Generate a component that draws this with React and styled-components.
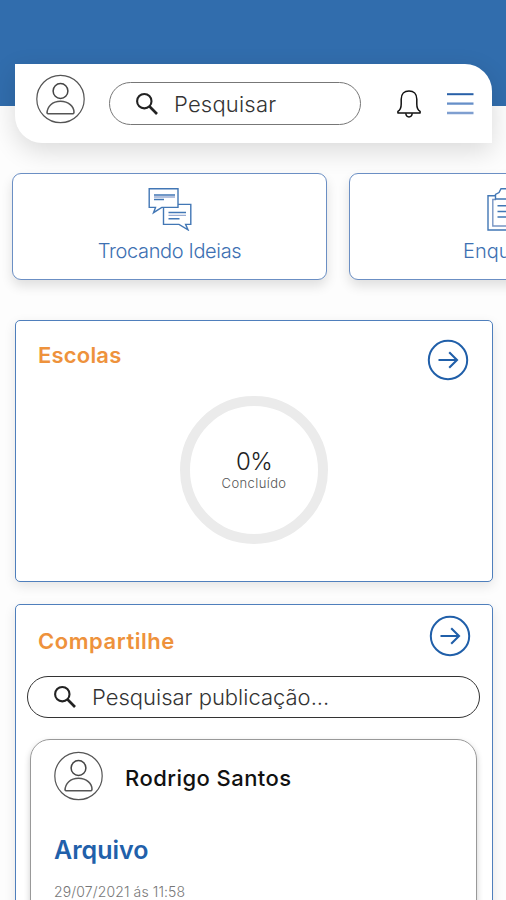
import React from "react";
import styled, { createGlobalStyle } from "styled-components";

const GlobalStyle = createGlobalStyle`
  * { box-sizing: border-box; }
  body {
    margin: 0;
    background: #fdfdfd;
    font-family: Inter, "Liberation Sans", sans-serif;
  }
`;

const Screen = styled.div`
  width: 506px;
  height: 900px;
  overflow: hidden;
`;

const Banner = styled.header`
  height: 106px;
  padding: 64px 14px 0 15px;
  background: #316dad;
`;

const TopBar = styled.div`
  display: flex;
  align-items: flex-start;
  height: 79px;
  padding: 10px 18px 0 21px;
  background: #fff;
  border-radius: 0 27px 0 27px;
  box-shadow: 0 8px 26px rgba(0, 0, 0, 0.14);
`;

const SearchBox = styled.div`
  display: flex;
  align-items: center;
  flex: none;
  width: ${(p) => p.$width}px;
  height: ${(p) => p.$height}px;
  margin: ${(p) => p.$margin};
  padding-left: 25px;
  gap: 15px;
  border: 1px solid ${(p) => p.$color};
  border-radius: 22px;
  background: #fff;
`;

const Label = styled.span`
  display: block;
  white-space: nowrap;
  font-size: ${(p) => p.$size}px;
  font-weight: ${(p) => p.$weight};
  line-height: ${(p) => p.$line || 30}px;
  letter-spacing: ${(p) => p.$spacing || 0}px;
  color: ${(p) => p.$color};
`;

const BarIcon = styled.div`
  display: flex;
  margin: ${(p) => p.$margin};
`;

const Carousel = styled.nav`
  display: flex;
  gap: 22px;
  width: 506px;
  margin-top: 67px;
  padding-left: 12px;
`;

const Shortcut = styled.a`
  display: flex;
  flex: none;
  flex-direction: column;
  align-items: center;
  width: 315px;
  height: 107px;
  padding-top: 13px;
  border: 1px solid #6b8fc4;
  border-radius: 9px;
  background: #fff;
  box-shadow: 0 6px 12px rgba(0, 0, 0, 0.12);
`;

const Panel = styled.section`
  width: 478px;
  height: ${(p) => p.$height}px;
  margin: ${(p) => p.$top}px 0 0 15px;
  border: 1px solid #4f7fbc;
  border-radius: 5px;
  background: #fff;
  box-shadow: 0 4px 12px rgba(0, 0, 0, 0.1);
`;

const PanelHead = styled.div`
  display: flex;
  justify-content: space-between;
  align-items: flex-start;
  height: ${(p) => p.$height}px;
  padding: ${(p) => p.$padding};
`;

const Heading = styled.div`
  padding-top: ${(p) => p.$top}px;
`;

const Ring = styled.div`
  display: flex;
  flex-direction: column;
  align-items: center;
  width: 148px;
  height: 148px;
  margin: 0 auto;
  padding-top: 42px;
  border: 10px solid #ebebeb;
  border-radius: 50%;
`;

const Post = styled.article`
  width: 447px;
  height: 220px;
  margin: 21px 0 0 14px;
  padding: 11px 23px;
  border: 1px solid #999;
  border-radius: 20px;
  box-shadow: 0 3px 6px rgba(0, 0, 0, 0.2);
`;

const Author = styled.div`
  display: flex;
  align-items: center;
  gap: 22px;
  height: 50px;
  margin-bottom: 34px;
`;

const Stamp = styled.div`
  padding-top: 17px;
`;

const Avatar = () => (
  <svg width="49" height="50" viewBox="0 0 49 50" fill="none" stroke="#555" strokeWidth="1.2">
    <circle cx="24.5" cy="25" r="23.7" />
    <circle cx="24.5" cy="17" r="7.4" stroke="#444" strokeWidth="1.5" />
    <path d="M11 39.5C11 32.5 16.5 27.2 24.5 27.2S38 32.5 38 38.2Q38 39.8 36 39.8H13Q11 39.8 11 38.2Z" strokeWidth="1.5" />
  </svg>
);

const Magnifier = () => (
  <svg width="24" height="24" viewBox="0 0 24 24" fill="none" stroke="#222" strokeWidth="2.1">
    <circle cx="9.3" cy="9.2" r="7.2" />
    <path d="M14.6 14.5L22 22" strokeWidth="2.6" />
  </svg>
);

const Bell = () => (
  <svg width="26" height="30" viewBox="0 0 26 30" fill="none" stroke="#111" strokeWidth="1.5" strokeLinejoin="round">
    <path d="M5.2 15V10.2C5.2 5 8.4 2 13 2S20.8 5 20.8 10.2V15C20.8 19.3 22.2 21.4 24.1 22.4V24H1.9V22.4C3.8 21.4 5.2 19.3 5.2 15Z" />
    <path d="M9.8 24.3C10.2 29.2 15.8 29.2 16.2 24.3" />
  </svg>
);

const Menu = () => (
  <svg width="27" height="24" viewBox="0 0 27 24">
    <path d="M0 2.2H26.5" stroke="#2860a8" strokeWidth="2" />
    <path d="M0 11.6H26.5" stroke="#668fc8" strokeWidth="2.3" />
    <path d="M0 21H26.5" stroke="#7f9fd0" strokeWidth="2.5" />
  </svg>
);

const Chats = () => (
  <svg width="44" height="44" viewBox="0 0 44 44" fill="none" stroke="#4277b5" strokeWidth="1.4">
    <path d="M1.2 1.7H30V20.4H13.8L5.5 25.7L7.5 20.4H1.2Z" />
    <path d="M30 17.4H42.8V37.4H37.6L40 42.8L31 37.4H15.5V20.4" />
    <path d="M6 8H27M6 12.6H16M20.5 25.6H38M20.5 31.8H31.5" strokeWidth="1.5" />
    <path d="M6 10H27M20.5 28.3H38" stroke="#9aadd4" strokeWidth="1.3" />
  </svg>
);

const Clipboard = () => (
  <svg width="40" height="44" viewBox="0 0 40 44" fill="none" stroke="#4277b5" strokeWidth="1.4">
    <path d="M9 8.8H1V43H39V8.8H31" />
    <path d="M9 12.5H5.8V39H34.2V12.5H31" stroke="#7895c4" />
    <path d="M8.5 12V7.5L12 5.5L14 1.7H26L28 5.5L31.5 7.5V12Z" />
    <path d="M10.5 18.8H29.5M10.5 24.5H29.5M10.5 30H29.5" />
  </svg>
);

const ArrowCircle = () => (
  <svg width="42" height="42" viewBox="0 0 42 42" fill="none" stroke="#205fa9" strokeWidth="2">
    <circle cx="21" cy="21" r="19.2" />
    <path d="M11.5 21H29.8M22.2 13.3L30 21L22.2 28.7" strokeWidth="2.1" />
  </svg>
);

export default function App() {
  return (
    <Screen>
      <GlobalStyle />
      <Banner>
        <TopBar>
          <Avatar />
          <SearchBox $width={252} $height={43} $margin="8px 0 0 24px" $color="#777">
            <Magnifier />
            <Label $size={22} $weight={300} $spacing={0.2} $color="#333">Pesquisar</Label>
          </SearchBox>
          <BarIcon $margin="15px 0 0 35px"><Bell /></BarIcon>
          <BarIcon $margin="18px 0 0 25px"><Menu /></BarIcon>
        </TopBar>
      </Banner>

      <Carousel>
        <Shortcut>
          <Chats />
          <Heading $top={5}>
            <Label $size={20} $weight={300} $spacing={-0.35} $color="#3d70b2">Trocando Ideias</Label>
          </Heading>
        </Shortcut>
        <Shortcut>
          <Clipboard />
          <Heading $top={5}>
            <Label $size={20} $weight={300} $color="#3d70b2">Enquetes</Label>
          </Heading>
        </Shortcut>
      </Carousel>

      <Panel $top={40} $height={262}>
        <PanelHead $height={75} $padding="18px 23px 0 22px">
          <Heading $top={1}>
            <Label $size={22} $weight={600} $spacing={0.2} $color="#ee923c">Escolas</Label>
          </Heading>
          <ArrowCircle />
        </PanelHead>
        <Ring>
          <Label $size={24} $weight={300} $line={28} $spacing={-0.6} $color="#222">0%</Label>
          <Label $size={13} $weight={300} $line={14} $spacing={0.4} $color="#555">Concluído</Label>
        </Ring>
      </Panel>

      <Panel $top={22} $height={400}>
        <PanelHead $height={71} $padding="10px 21px 0 22px">
          <Heading $top={11}>
            <Label $size={22} $weight={600} $spacing={0.55} $color="#ee923c">Compartilhe</Label>
          </Heading>
          <ArrowCircle />
        </PanelHead>
        <SearchBox $width={453} $height={42} $margin="0 0 0 11px" $color="#333">
          <Magnifier />
          <Label $size={22} $weight={300} $color="#333">Pesquisar publicação...</Label>
        </SearchBox>
        <Post>
          <Author>
            <Avatar />
            <Heading $top={3}>
              <Label $size={22} $weight={500} $spacing={0.45} $color="#111">Rodrigo Santos</Label>
            </Heading>
          </Author>
          <Label $size={25} $weight={600} $color="#2160aa">Arquivo</Label>
          <Stamp>
            <Label $size={14} $weight={300} $line={20} $spacing={0.12} $color="#777">29/07/2021 ás 11:58</Label>
          </Stamp>
        </Post>
      </Panel>
    </Screen>
  );
}
